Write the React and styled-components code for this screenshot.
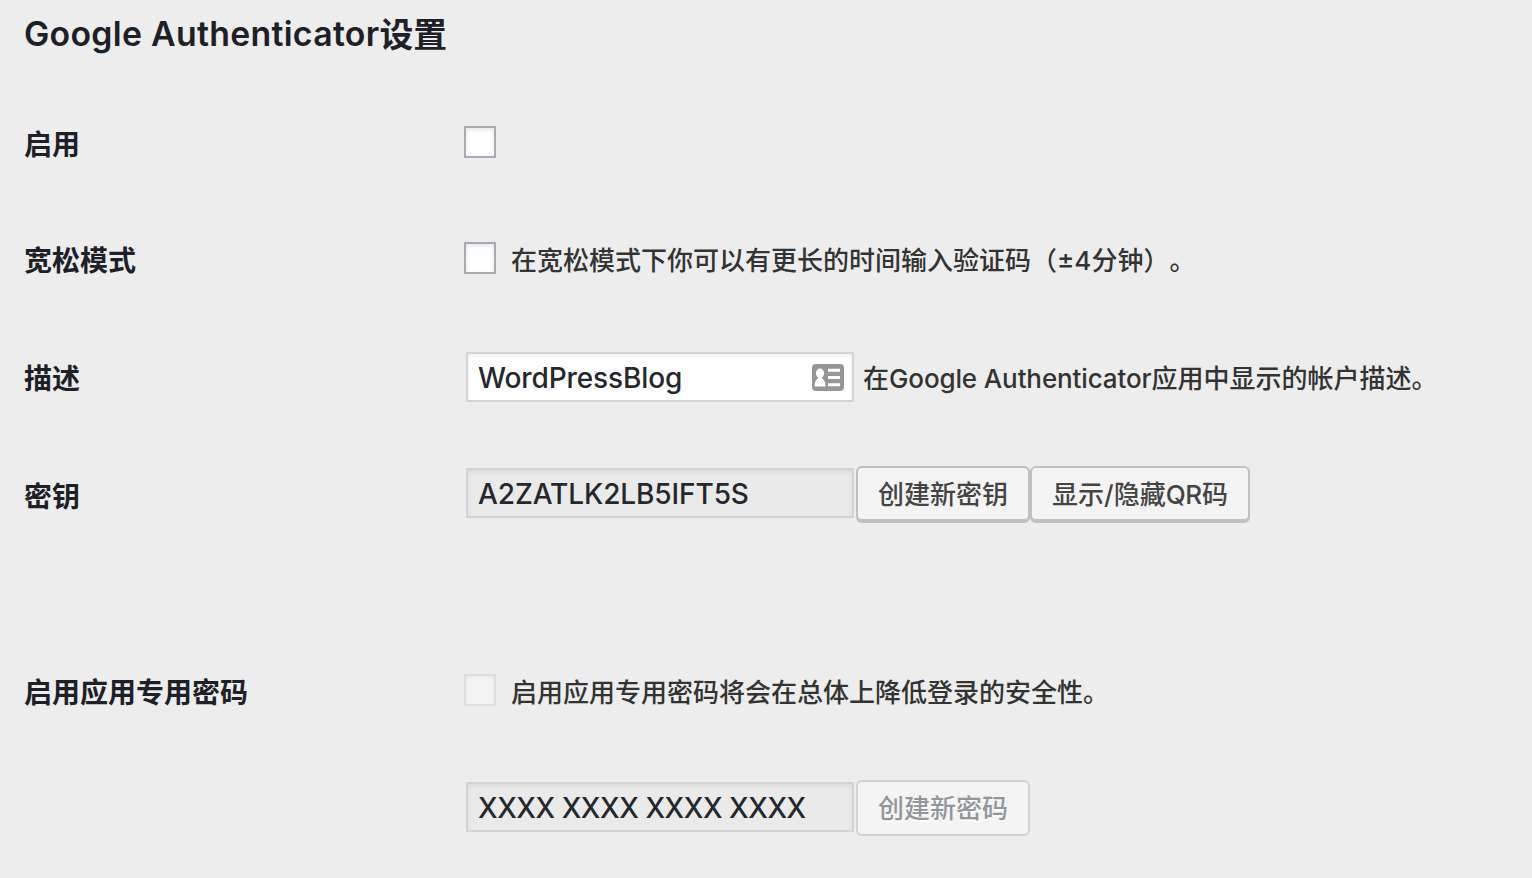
import React from 'react'
import styled, { createGlobalStyle } from 'styled-components'

const App = () => {
  return (
    <Page>
      <GlobalStyle />
      <Title><Latin spacing="0.3px" raise="1px">Google Authenticator</Latin>设置</Title>
      <Row space={56}>
        <Label>启用</Label>
        <Checkbox type="checkbox" />
      </Row>
      <Row space={59}>
        <Label>宽松模式</Label>
        <Checkbox type="checkbox" />
        <Description indent={15}>在宽松模式下你可以有更长的时间输入验证码（<Latin>±4</Latin>分钟）。</Description>
      </Row>
      <Row space={56}>
        <Label lift={1}>描述</Label>
        <Field>
          <FieldText spacing="-0.12px">WordPressBlog</FieldText>
          <ContactIcon />
        </Field>
        <Description indent={9} lift={1}>在<Latin spacing="-0.13px">Google Authenticator</Latin>应用中显示的帐户描述。</Description>
      </Row>
      <Row space={137}>
        <Label lift={-1}>密钥</Label>
        <Field readOnly><FieldText spacing="-0.1px">A2ZATLK2LB5IFT5S</FieldText></Field>
        <Button>创建新密钥</Button>
        <Button>显示/隐藏<Latin spacing="-0.3px">QR</Latin>码</Button>
      </Row>
      <Row space={57}>
        <Label>启用应用专用密码</Label>
        <Checkbox type="checkbox" disabled />
        <Description indent={15}>启用应用专用密码将会在总体上降低登录的安全性。</Description>
      </Row>
      <Row space={0}>
        <Label />
        <Field readOnly><FieldText spacing="-0.45px">XXXX XXXX XXXX XXXX</FieldText></Field>
        <Button disabled>创建新密码</Button>
      </Row>
    </Page>
  )
}

const ContactIcon = () => (
  <svg width="32" height="27" viewBox="0 0 32 27">
    <rect width="32" height="27" rx="4" fill="#969696" />
    <ellipse cx="8" cy="9.2" rx="4.1" ry="4.7" fill="#fff" />
    <path d="M2.5 22.5 C2.5 18 4 15.5 6 14.2 L6 12 H10 V14.2 C12 15.5 13.5 18 13.5 22.5 Z" fill="#fff" />
    <path d="M16 6.3 H28 M16 13.5 H28 M16 20.7 H28" stroke="#fff" strokeWidth="3" />
  </svg>
)

export default App

const GlobalStyle = createGlobalStyle`
  body {
    margin: 0;
    background: #ededed;
    color: #333;
    font-family: Inter, "Noto Sans CJK SC", sans-serif;
    font-size: 26px;
    font-weight: 450;
    text-spacing-trim: space-all;
  }
  * {
    box-sizing: border-box;
  }
`

const Page = styled.main`
  height: 878px;
  padding: 10px 24px 0;
  overflow: hidden;
  white-space: nowrap;
`

const Title = styled.h2`
  height: 50px;
  margin: 0 0 52px;
  color: #1d2027;
  font-size: 33.8px;
  font-weight: 600;
  line-height: 50px;
`

const Latin = styled.span`
  line-height: 1;
  letter-spacing: ${props => props.spacing || 'normal'};
  vertical-align: ${props => props.raise || 'baseline'};
`

const Row = styled.div`
  display: flex;
  align-items: center;
  height: 60px;
  margin-bottom: ${props => props.space}px;
`

const Label = styled.div`
  flex: 0 0 440px;
  padding-top: ${props => 6 - 2 * (props.lift || 0)}px;
  color: #1d2027;
  font-size: 28px;
  font-weight: 700;
  line-height: 40px;
`

const Checkbox = styled.input`
  appearance: none;
  width: 32px;
  height: 32px;
  margin: 0;
  border: 2px solid #a5aab3;
  background: #fff;
  box-shadow: inset 0 2px 4px rgba(0, 0, 0, 0.1);

  &:disabled {
    border-color: #dfdfdf;
    background: #f3f3f3;
    box-shadow: inset 0 2px 4px rgba(0, 0, 0, 0.03);
  }
`

const Description = styled.span`
  padding-top: ${props => 6 - 2 * (props.lift || 0)}px;
  margin-left: ${props => props.indent}px;
  line-height: 40px;
`

const Field = styled.div`
  display: flex;
  align-items: center;
  justify-content: space-between;
  width: 388px;
  height: 50px;
  margin-left: 2px;
  padding: 1px 8px 0 10px;
  border: 2px solid #d4d4d4;
  background: ${props => props.readOnly ? '#eaeaea' : '#fff'};
  box-shadow: inset 0 2px 4px rgba(0, 0, 0, 0.07);
  color: #24272d;
  font-size: 28px;
`

const FieldText = styled.span`
  padding-top: 1px;
  letter-spacing: ${props => props.spacing || 'normal'};
`

const Button = styled.button`
  height: 56px;
  margin: 1px 0 0 2px;
  padding: 2px 20px 0;
  border: 2px solid #c0c0c0;
  border-radius: 6px;
  background: #f4f4f4;
  box-shadow: inset 0 -1px 0 #c0c0c0, 0 1px 0 #c0c0c0;
  color: #444;
  font-family: inherit;
  font-size: 26px;
  font-weight: inherit;
  line-height: 50px;

  & + & {
    margin-left: 0;
  }

  &:disabled {
    border-color: #d4d4d4;
    box-shadow: none;
    color: #91969b;
    text-shadow: 0 2px 0 #fff;
  }
`
